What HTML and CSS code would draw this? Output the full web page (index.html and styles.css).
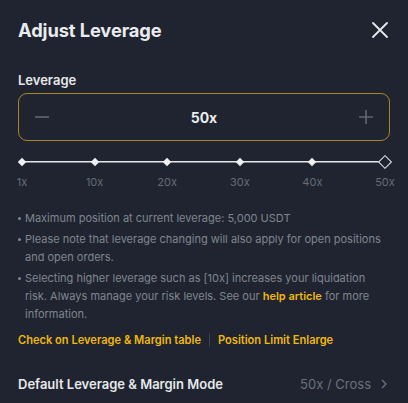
FILE: index.html
```html
<!DOCTYPE html>
<html>
<head>
<meta charset="utf-8">
<link rel="stylesheet" href="styles.css">
</head>
<body>
<div class="modal">
  <div class="header">
    <h1 class="title">Adjust Leverage</h1>
    <button class="close" aria-label="Close">
      <svg width="16" height="16" viewBox="0 0 16 16"><path d="M1 1L15 15M15 1L1 15" stroke="#e6e8ea" stroke-width="1.8" stroke-linecap="round"/></svg>
    </button>
  </div>
  <div class="label">Leverage</div>
  <div class="stepper">
    <span class="step">
      <svg width="16" height="16" viewBox="0 0 16 16"><path d="M1 8H15" stroke="#5f6673" stroke-width="1.6"/></svg>
    </span>
    <span class="value">50x</span>
    <span class="step">
      <svg width="16" height="16" viewBox="0 0 16 16"><path d="M1 8H15M8 1V15" stroke="#5f6673" stroke-width="1.6"/></svg>
    </span>
  </div>
  <div class="slider">
    <div class="tick"><span class="dot"></span><span class="tick-label">1x</span></div>
    <div class="tick"><span class="dot"></span><span class="tick-label">10x</span></div>
    <div class="tick"><span class="dot"></span><span class="tick-label">20x</span></div>
    <div class="tick"><span class="dot"></span><span class="tick-label">30x</span></div>
    <div class="tick"><span class="dot"></span><span class="tick-label">40x</span></div>
    <div class="tick"><span class="dot dot-active"></span><span class="tick-label">50x</span></div>
  </div>
  <ul class="notes">
    <li>Maximum position at current leverage: 5,000 USDT</li>
    <li>Please note that leverage changing will also apply for open positions and open orders.</li>
    <li>Selecting higher leverage such as [10x] increases your liquidation risk. Always manage your risk levels. See our <a class="link" href="#">help article</a> for more information.</li>
  </ul>
  <div class="links">
    <a class="link" href="#">Check on Leverage &amp; Margin table</a>
    <span class="sep"></span>
    <a class="link" href="#">Position Limit Enlarge</a>
  </div>
  <div class="default-row">
    <span class="default-title">Default Leverage &amp; Margin Mode</span>
    <span class="default-value">50x / Cross
      <svg width="8" height="10" viewBox="0 0 8 10"><path d="M2 1L6 5L2 9" fill="none" stroke="#6b717c" stroke-width="1.4"/></svg>
    </span>
  </div>
</div>
</body>
</html>
```
FILE: styles.css
```css
* { box-sizing: border-box; }
html, body { margin: 0; padding: 0; }
body {
  background: #1f2430;
  font-family: Inter, "Noto Sans", sans-serif;
  color: #e6e8ea;
  width: 408px;
  height: 403px;
  overflow: hidden;
}
.modal {
  padding: 17px 18px 0 18px;
}
.header {
  display: flex;
  justify-content: space-between;
  align-items: center;
  height: 26px;
}
.title {
  margin: 0;
  font-size: 18.3px;
  font-weight: 700;
  letter-spacing: -0.1px;
  color: #e9ebee;
}
.close {
  background: none;
  border: none;
  padding: 0;
  margin-right: 2px;
  display: flex;
}
.label {
  margin-top: 29px;
  font-size: 13px;
  font-weight: 600;
  line-height: 16px;
  color: #e6e8ea;
}
.stepper {
  margin-top: 5px;
  height: 48px;
  border: 1px solid #a8862b;
  border-radius: 9px;
  display: flex;
  align-items: center;
  justify-content: space-between;
  padding: 0 15px;
}
.step { display: flex; }
.value {
  font-size: 14px;
  font-weight: 700;
  color: #e9ebee;
}
.slider {
  margin: 15px 5px 0 4px;
  display: flex;
  justify-content: space-between;
  background: linear-gradient(#e6e8ea, #e6e8ea) no-repeat 0 5px / 100% 1.5px;
}
.tick {
  width: 0;
  display: flex;
  flex-direction: column;
  align-items: center;
}
.dot {
  width: 6px;
  height: 6px;
  margin-top: 3px;
  background: #eef0f2;
  transform: rotate(45deg);
  flex: none;
}
.dot-active {
  width: 10px;
  height: 10px;
  margin-top: 1px;
  background: #1f2430;
  border: 1.5px solid #eef0f2;
}
.tick-label {
  margin-top: 10px;
  font-size: 11px;
  color: #666c78;
  white-space: nowrap;
}
.dot-active + .tick-label { margin-top: 8px; }
.notes {
  list-style: none;
  margin: 20px 0 0 0;
  padding: 0;
  font-size: 11px;
  line-height: 18px;
  color: #80868f;
}
.notes li {
  position: relative;
  padding-left: 7px;
  margin-bottom: 3px;
}
.notes li::before {
  content: "";
  position: absolute;
  left: 0;
  top: 8px;
  width: 3px;
  height: 3px;
  border-radius: 50%;
  background: #80868f;
}
.link {
  color: #f0b90b;
  font-weight: 600;
  text-decoration: none;
}
.links {
  margin-top: 8px;
  display: flex;
  align-items: center;
  font-size: 11.1px;
  line-height: 18px;
}
.sep {
  width: 1px;
  height: 14px;
  background: #3a404c;
  margin: 0 8px;
}
.default-row {
  margin-top: 27px;
  display: flex;
  justify-content: space-between;
  align-items: center;
}
.default-title {
  font-size: 13px;
  font-weight: 600;
  color: #e6e8ea;
}
.default-value {
  font-size: 13px;
  color: #6b717c;
  display: flex;
  align-items: center;
  gap: 9px;
  margin-right: 2px;
}
```
